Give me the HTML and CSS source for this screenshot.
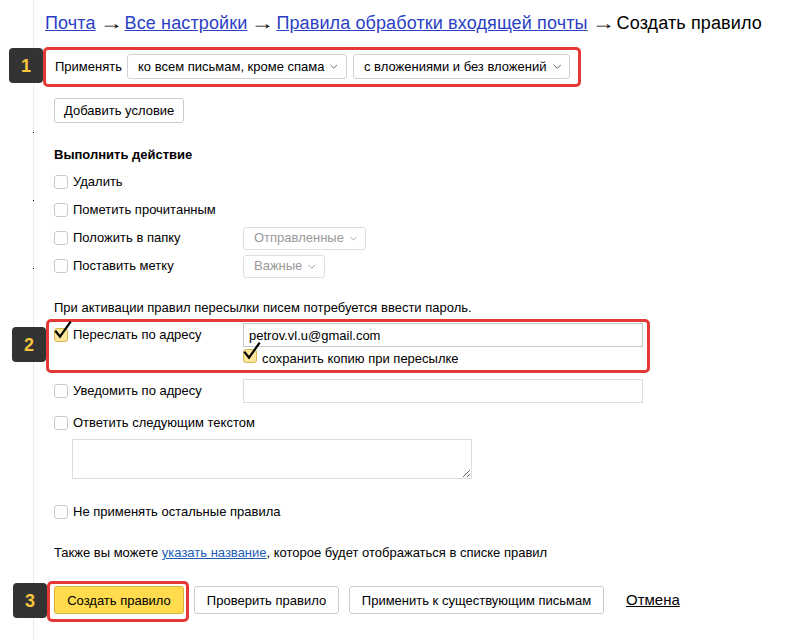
FILE: index.html
```html
<!DOCTYPE html>
<html lang="ru">
<head>
<meta charset="utf-8">
<title>Создать правило</title>
<link rel="stylesheet" href="styles.css">
</head>
<body>
<div class="page">
  <nav class="crumbs"><a href="#">Почта</a><span class="arr">→</span><a href="#">Все настройки</a><span class="arr">→</span><a href="#">Правила обработки входящей почты</a><span class="arr">→</span>Создать правило</nav>

  <div class="mark mark-apply">
    <span class="badge">1</span>
    <span class="apply-label">Применять</span>
    <span class="select select-a">ко всем письмам, кроме спама<svg class="chev" viewBox="0 0 9 5"><polyline points="0.5,0.5 4.5,4.5 8.5,0.5"/></svg></span>
    <span class="select select-b">с вложениями и без вложений<svg class="chev" viewBox="0 0 9 5"><polyline points="0.5,0.5 4.5,4.5 8.5,0.5"/></svg></span>
  </div>

  <div class="cond"><button class="btn btn-sm">Добавить условие</button></div>

  <div class="heading">Выполнить действие</div>
  <div class="actions">
    <div class="row"><label class="check"><span class="box"></span>Удалить</label></div>
    <div class="row"><label class="check"><span class="box"></span>Пометить прочитанным</label></div>
    <div class="row"><label class="check col"><span class="box"></span>Положить в папку</label><span class="select select-off select-folder">Отправленные<svg class="chev" viewBox="0 0 9 5"><polyline points="0.5,0.5 4.5,4.5 8.5,0.5"/></svg></span></div>
    <div class="row"><label class="check col"><span class="box"></span>Поставить метку</label><span class="select select-off select-label">Важные<svg class="chev" viewBox="0 0 9 5"><polyline points="0.5,0.5 4.5,4.5 8.5,0.5"/></svg></span></div>
  </div>

  <p class="note">При активации правил пересылки писем потребуется ввести пароль.</p>

  <div class="mark mark-forward">
    <span class="badge">2</span>
    <div class="fwd-row">
      <label class="check col"><span class="box box-on"><svg class="tick" viewBox="0 0 18 22"><polyline points="1.3,10.7 6,16.7 16.7,1.7"/></svg></span>Переслать по адресу</label>
      <input class="field" type="text" value="petrov.vl.u@gmail.com">
    </div>
    <label class="check keep"><span class="box box-on"><svg class="tick" viewBox="0 0 18 22"><polyline points="1.3,10.7 6,16.7 16.7,1.7"/></svg></span>сохранить копию при пересылке</label>
  </div>

  <div class="row row-notify"><label class="check col"><span class="box"></span>Уведомить по адресу</label><input class="field field-light" type="text"></div>
  <div class="row row-reply"><label class="check"><span class="box"></span>Ответить следующим текстом</label></div>
  <textarea class="reply-text"></textarea>
  <div class="row row-stop"><label class="check"><span class="box"></span>Не применять остальные правила</label></div>

  <p class="hint">Также вы можете <a href="#">указать название</a>, которое будет отображаться в списке правил</p>

  <div class="footer">
    <div class="mark mark-create">
      <span class="badge">3</span>
      <button class="btn btn-primary">Создать правило</button>
    </div>
    <button class="btn btn-check">Проверить правило</button>
    <button class="btn btn-apply">Применить к существующим письмам</button>
    <a class="cancel" href="#">Отмена</a>
  </div>
</div>
</body>
</html>
```

FILE: styles.css
```css
html {
  height: 100%;
  background:
    linear-gradient(#000, #000) 33px 132px / 1px 1px no-repeat,
    linear-gradient(#000, #000) 33px 200px / 1px 1px no-repeat,
    linear-gradient(#000, #000) 33px 268px / 1px 1px no-repeat,
    linear-gradient(#ececec, #ececec) 33px 0 / 1px 100% no-repeat,
    #fff;
}
body {
  margin: 0;
  font-family: "Liberation Sans", Arial, sans-serif;
  font-size: 13px;
  line-height: 16px;
  color: #000;
}
.page {
  padding: 12px 0 0 54px;
}
.crumbs {
  margin-left: -9px;
  font-size: 18px;
  line-height: 22px;
  letter-spacing: 0.12px;
  white-space: nowrap;
}
.crumbs a {
  color: #2a3fc4;
}
.arr {
  display: inline-block;
  width: 17px;
  margin: 0 6px;
  text-align: center;
  transform: scaleX(1.3);
}

/* red annotation frames */
.mark {
  position: relative;
  border: 3px solid #e53935;
  border-radius: 5px;
}
.badge {
  position: absolute;
  left: -37px;
  width: 34px;
  height: 35px;
  background: #333;
  border-radius: 4px;
  color: #f7c63c;
  font-size: 18px;
  font-weight: bold;
  display: flex;
  align-items: center;
  justify-content: center;
}
.mark-apply {
  margin-top: 13px;
  margin-left: -11px;
  display: inline-flex;
  align-items: center;
  padding: 4px 8px 5px 9px;
}
.mark-apply .badge { top: -2px; }
.apply-label {
  width: 65px;
  margin-right: 7px;
}

.select {
  display: inline-flex;
  align-items: center;
  justify-content: space-between;
  box-sizing: border-box;
  height: 25px;
  padding: 0 8px 0 10px;
  border: 1px solid #d2d2d2;
  border-radius: 3px;
  background: #fff;
  white-space: nowrap;
}
.select-a { width: 220px; margin-right: 6px; }
.select-b { width: 217px; }
.chev {
  width: 9px;
  height: 5px;
  margin-left: 6px;
  fill: none;
  stroke: #555;
  stroke-width: 1;
}
.select-off {
  height: 23px;
  color: #999;
  border-color: #dedede;
}
.select-off .chev { stroke: #999; }
.select-folder { width: 123px; }
.select-label { width: 82px; }

.btn {
  box-sizing: border-box;
  font-family: inherit;
  font-size: 13px;
  color: #000;
  background: #fff;
  border: 1px solid #ccc;
  border-radius: 3px;
  padding: 0;
  height: 28px;
  white-space: nowrap;
  cursor: pointer;
}
.btn-sm {
  height: 25px;
  padding: 0 9px;
}
.cond { margin-top: 11px; }

.heading {
  margin-top: 24px;
  font-weight: bold;
}
.actions { margin-top: 5px; }
.row {
  display: flex;
  align-items: center;
  height: 28px;
}
.check {
  display: inline-flex;
  align-items: center;
}
.col { width: 189px; flex: none; }
.box {
  position: relative;
  box-sizing: border-box;
  width: 14px;
  height: 14px;
  margin-right: 5px;
  border: 1px solid #c9c9c9;
  border-radius: 3px;
  background: #fff;
  flex: none;
}
.box-on {
  background: #fce79b;
  border-color: #d4b551;
}
.tick {
  position: absolute;
  left: -1px;
  top: -9px;
  width: 18px;
  height: 22px;
  fill: none;
  stroke: #000;
  stroke-width: 2.2;
}

.note {
  margin: 20px 0 0;
}
.mark-forward {
  box-sizing: border-box;
  width: 604px;
  margin-top: 3px;
  margin-left: -8px;
  padding: 1px 4px 3px 5px;
}
.mark-forward .badge { top: 5px; }
.fwd-row {
  display: flex;
  align-items: center;
}
.field {
  box-sizing: border-box;
  width: 400px;
  height: 24px;
  margin: 0;
  padding: 0 5px;
  border: 1px solid #c8c8c8;
  font-family: inherit;
  font-size: 13px;
  color: #000;
}
.field-light { border-color: #dcdcdc; }
.keep {
  margin: 4px 0 0 189px;
  align-items: flex-start;
  height: 16px;
}
.keep .box { margin-top: -2px; }

.row-notify { height: 24px; margin-top: 6px; }
.row-reply { height: 24px; margin-top: 8px; }
.reply-text {
  display: block;
  box-sizing: border-box;
  width: 400px;
  height: 40px;
  margin: 4px 0 0 18px;
  border: 1px solid #dcdcdc;
  resize: both;
}
.row-stop { height: 24px; margin-top: 21px; }

.hint { margin: 21px 0 0; }
.hint a { color: #1d5cb4; }

.footer {
  display: flex;
  align-items: flex-start;
  margin-top: 20px;
}
.mark-create {
  margin-left: -7px;
  padding: 2px 2px 5px 4px;
}
.mark-create .badge { top: -1px; }
.btn-primary {
  width: 130px;
  background: #ffdb4d;
  border-color: #d2b442;
}
.btn-check {
  width: 145px;
  margin: 5px 0 0 5px;
}
.btn-apply {
  width: 255px;
  margin: 5px 0 0 10px;
}
.cancel {
  margin: 10px 0 0 22px;
  font-size: 15px;
  line-height: 18px;
  color: #000;
}
```
